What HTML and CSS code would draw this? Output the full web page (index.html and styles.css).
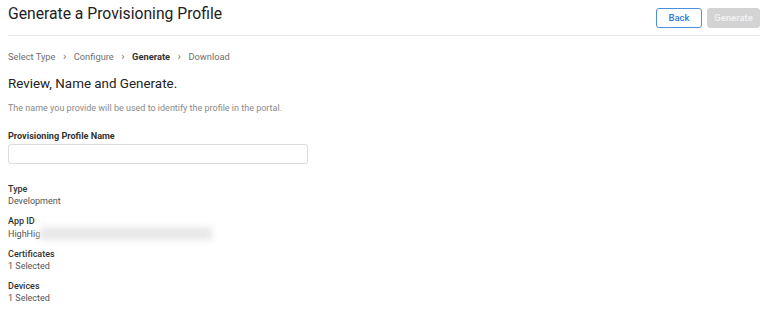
FILE: index.html
```html
<!DOCTYPE html>
<html>
<head>
<meta charset="utf-8">
<link rel="stylesheet" href="styles.css">
</head>
<body>
<div class="page">
  <header class="header">
    <h1 class="title">Generate a Provisioning Profile</h1>
    <div class="actions">
      <button class="btn btn-back">Back</button>
      <button class="btn btn-generate">Generate</button>
    </div>
  </header>
  <nav class="crumbs">
    <span>Select Type</span><span class="sep">&rsaquo;</span>
    <span>Configure</span><span class="sep">&rsaquo;</span>
    <span class="current">Generate</span><span class="sep">&rsaquo;</span>
    <span>Download</span>
  </nav>
  <h2 class="heading">Review, Name and Generate.</h2>
  <p class="desc">The name you provide will be used to identify the profile in the portal.</p>
  <label class="field-label">Provisioning Profile Name</label>
  <input class="field-input" type="text">
  <dl class="details">
    <div class="item"><dt>Type</dt><dd>Development</dd></div>
    <div class="item"><dt>App ID</dt><dd>HighHig<span class="redact"></span></dd></div>
    <div class="item"><dt>Certificates</dt><dd>1 Selected</dd></div>
    <div class="item"><dt>Devices</dt><dd>1 Selected</dd></div>
  </dl>
</div>
</body>
</html>
```
FILE: styles.css
```css
* { box-sizing: border-box; }
html, body { margin: 0; padding: 0; background: #fff; }
body { font-family: Roboto, "Liberation Sans", Arial, sans-serif; color: #333; }
.page { width: 752px; margin-left: 8px; }
.header {
  display: flex; align-items: flex-start; justify-content: space-between;
  border-bottom: 1px solid #e6e6e6; height: 36px;
}
.title { margin: 0; padding-top: 4px; font-size: 15.7px; font-weight: 400; color: #222; line-height: 20px; }
.actions { display: flex; gap: 5px; padding-top: 8px; }
.btn {
  font-family: inherit; font-size: 9.5px; height: 20px; border-radius: 3px;
  padding: 0; cursor: pointer; line-height: 18px;
}
.btn-back { width: 46px; background: #fff; border: 1px solid #4a90e2; color: #2d7bd5; font-weight: 500; }
.btn-generate { width: 53px; background: #d3d3d3; border: 1px solid #d3d3d3; color: #f2f2f2; font-weight: 500; }
.crumbs { display: flex; align-items: center; margin-top: 15px; font-size: 9.3px; color: #6f6f6f; line-height: 12px; }
.crumbs .sep { margin: 0 7.5px; color: #777; font-size: 11px; }
.crumbs .current { color: #333; font-weight: 700; }
.heading { margin: 12px 0 0; font-size: 13.4px; font-weight: 400; color: #222; line-height: 18px; }
.desc { margin: 9px 0 0; font-size: 9px; color: #8a8a8a; line-height: 12px; }
.field-label { display: block; margin-top: 16px; font-size: 9.1px; font-weight: 700; color: #333; line-height: 12px; }
.field-input {
  display: block; margin-top: 2px; width: 300px; height: 20px;
  border: 1px solid #dcdcdc; border-radius: 3px; background: #fff;
}
.details { margin: 19px 0 0; display: flex; flex-direction: column; gap: 8px; }
.item dt { font-size: 9px; font-weight: 500; color: #333; line-height: 12px; }
.item dd { margin: 0; font-size: 9px; color: #555; line-height: 12px; display: flex; align-items: center; }
.redact {
  display: inline-block; width: 172px; height: 13px; margin-left: 0;
  background: #e8e8e8; filter: blur(3px);
}
```
